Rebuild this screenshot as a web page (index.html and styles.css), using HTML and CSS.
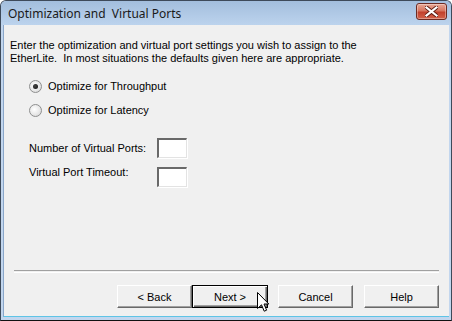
FILE: index.html
```html
<!DOCTYPE html>
<html lang="en">
<head>
    <meta charset="UTF-8">
    <title>Optimization and Virtual Ports</title>
    <link rel="stylesheet" href="styles.css">
</head>
<body>
    <div class="window">
        <div class="titlebar">
            <span class="title">Optimization and&nbsp; Virtual Ports</span>
            <button class="close-button" aria-label="Close">
                <svg width="13" height="11" viewBox="0 0 13 11">
                    <path d="M1.5 1.5 L11.5 9.5 M11.5 1.5 L1.5 9.5" stroke="#5a1a10" stroke-width="4" stroke-linecap="square"/>
                    <path d="M1.5 1.5 L11.5 9.5 M11.5 1.5 L1.5 9.5" stroke="#ffffff" stroke-width="2.2" stroke-linecap="square"/>
                </svg>
            </button>
        </div>
        <div class="client">
            <p class="intro">
                Enter the optimization and virtual port settings you wish to assign to the<br>
                EtherLite.&nbsp; In most situations the defaults given here are appropriate.
            </p>

            <div class="options">
                <label class="radio-row">
                    <span class="radio checked"></span>
                    Optimize for Throughput
                </label>
                <label class="radio-row">
                    <span class="radio"></span>
                    Optimize for Latency
                </label>
            </div>

            <div class="fields">
                <span class="field-label">Number of Virtual Ports:</span>
                <span class="text-box"></span>
                <span class="field-label second">Virtual Port Timeout:</span>
                <span class="text-box"></span>
            </div>

            <div class="footer">
                <div class="separator"></div>
                <div class="buttons">
                    <button class="push-button">&lt; Back</button>
                    <button class="push-button default">Next &gt;</button>
                    <button class="push-button cancel">Cancel</button>
                    <button class="push-button help">Help</button>
                </div>
            </div>
        </div>
    </div>

    <!-- mouse pointer hovering over Next -->
    <svg class="pointer" width="13" height="21" viewBox="0 0 13 21">
        <path d="M0.5 0.5 L0.5 16.5 L4.5 12.8 L7.2 19.2 L9.6 18.2 L7 12 L11.8 12 Z" fill="#ffffff" stroke="#000000" stroke-width="1" stroke-linejoin="miter"/>
    </svg>
</body>
</html>
```

FILE: styles.css
```css
:root {
    --face-color: #f0f0f0;
    --frame-color: #c2d6ee;
    --shadow-color: #a0a0a0;
    --dark-shadow: #696969;
    --text-color: #000000;
}

body {
    margin: 0;
    padding: 0;
    width: 452px;
    height: 321px;
    overflow: hidden;
    background: #ffffff;
    font-family: "Liberation Sans", Arial, sans-serif;
    font-size: 11px;
    color: var(--text-color);
}

.window {
    box-sizing: border-box;
    width: 452px;
    height: 321px;
    display: flex;
    flex-direction: column;
    border: 1px solid #3e4a5a;
    border-radius: 6px 6px 0 0;
    background: var(--frame-color);
    padding: 0 2px 3px 2px;
    border-bottom-color: #111;
}

.titlebar {
    height: 24px;
    margin: 0 -2px;
    padding: 0 4px 0 7px;
    display: flex;
    align-items: center;
    justify-content: space-between;
    background: linear-gradient(#a3bedd, #bcd3ed);
    border-radius: 5px 5px 0 0;
}

.title {
    font-family: "Noto Sans", "Open Sans", sans-serif;
    font-size: 12px;
    color: #1a1a1a;
    padding-top: 1px;
}

.close-button {
    width: 31px;
    height: 17px;
    margin-top: -3px;
    padding: 0;
    display: flex;
    align-items: center;
    justify-content: center;
    border: 1px solid #6d2b22;
    border-radius: 3px;
    background: linear-gradient(#e8a896 0%, #d7755f 45%, #c2412c 55%, #d2634b 100%);
    box-shadow: inset 0 0 0 1px rgba(255, 255, 255, 0.35);
}

.client {
    flex: 1;
    display: flex;
    flex-direction: column;
    background: var(--face-color);
    padding: 14px 10px 8px 6px;
    border-left: 1px solid #8aa6c9;
    border-bottom: 1px solid #5ec4e6;
}

.intro {
    margin: 0;
    line-height: 13px;
}

.options {
    margin-top: 13px;
    margin-left: 19px;
    display: flex;
    flex-direction: column;
    gap: 8px;
}

.radio-row {
    height: 16px;
    display: flex;
    align-items: center;
    gap: 6px;
}

.radio {
    box-sizing: border-box;
    width: 13px;
    height: 13px;
    border-radius: 50%;
    border: 1px solid #8e8f8f;
    background: radial-gradient(circle at 40% 40%, #ffffff 0%, #e6e6e6 60%, #cfcfcf 100%);
    position: relative;
}

.radio.checked::after {
    content: "";
    position: absolute;
    left: 3px;
    top: 3px;
    width: 5px;
    height: 5px;
    border-radius: 50%;
    background: radial-gradient(circle at 40% 40%, #444, #111);
}

.fields {
    margin-top: 20px;
    margin-left: 19px;
    display: grid;
    grid-template-columns: 128px 30px;
    row-gap: 9px;
    align-items: center;
}

.field-label.second {
    margin-top: -10px;
}

.text-box {
    box-sizing: border-box;
    width: 30px;
    height: 20px;
    background: #ffffff;
    border-top: 2px solid var(--dark-shadow);
    border-left: 2px solid var(--dark-shadow);
    border-right: 1px solid #e3e3e3;
    border-bottom: 1px solid #e3e3e3;
    box-shadow: 1px 1px 0 #ffffff;
}

.footer {
    margin-top: auto;
}

.separator {
    margin-left: 4px;
    height: 1px;
    border-top: 1px solid var(--shadow-color);
    border-bottom: 1px solid #ffffff;
    margin-bottom: 12px;
}

.buttons {
    display: flex;
    justify-content: flex-end;
}

.push-button {
    box-sizing: border-box;
    width: 75px;
    height: 23px;
    padding: 0;
    font-family: "Liberation Sans", Arial, sans-serif;
    font-size: 11px;
    color: var(--text-color);
    background: var(--face-color);
    border-top: 1px solid #ffffff;
    border-left: 1px solid #ffffff;
    border-right: 1px solid var(--dark-shadow);
    border-bottom: 1px solid var(--dark-shadow);
    box-shadow: inset -1px -1px 0 var(--shadow-color);
}

.push-button.default {
    width: 76px;
    border: 1px solid #000000;
    box-shadow: inset 1px 1px 0 #ffffff, inset -1px -1px 0 var(--dark-shadow), inset -2px -2px 0 var(--shadow-color);
}

.push-button.cancel {
    margin-left: 10px;
}

.push-button.help {
    margin-left: 11px;
}

.pointer {
    position: absolute;
    left: 257px;
    top: 292px;
}
```
